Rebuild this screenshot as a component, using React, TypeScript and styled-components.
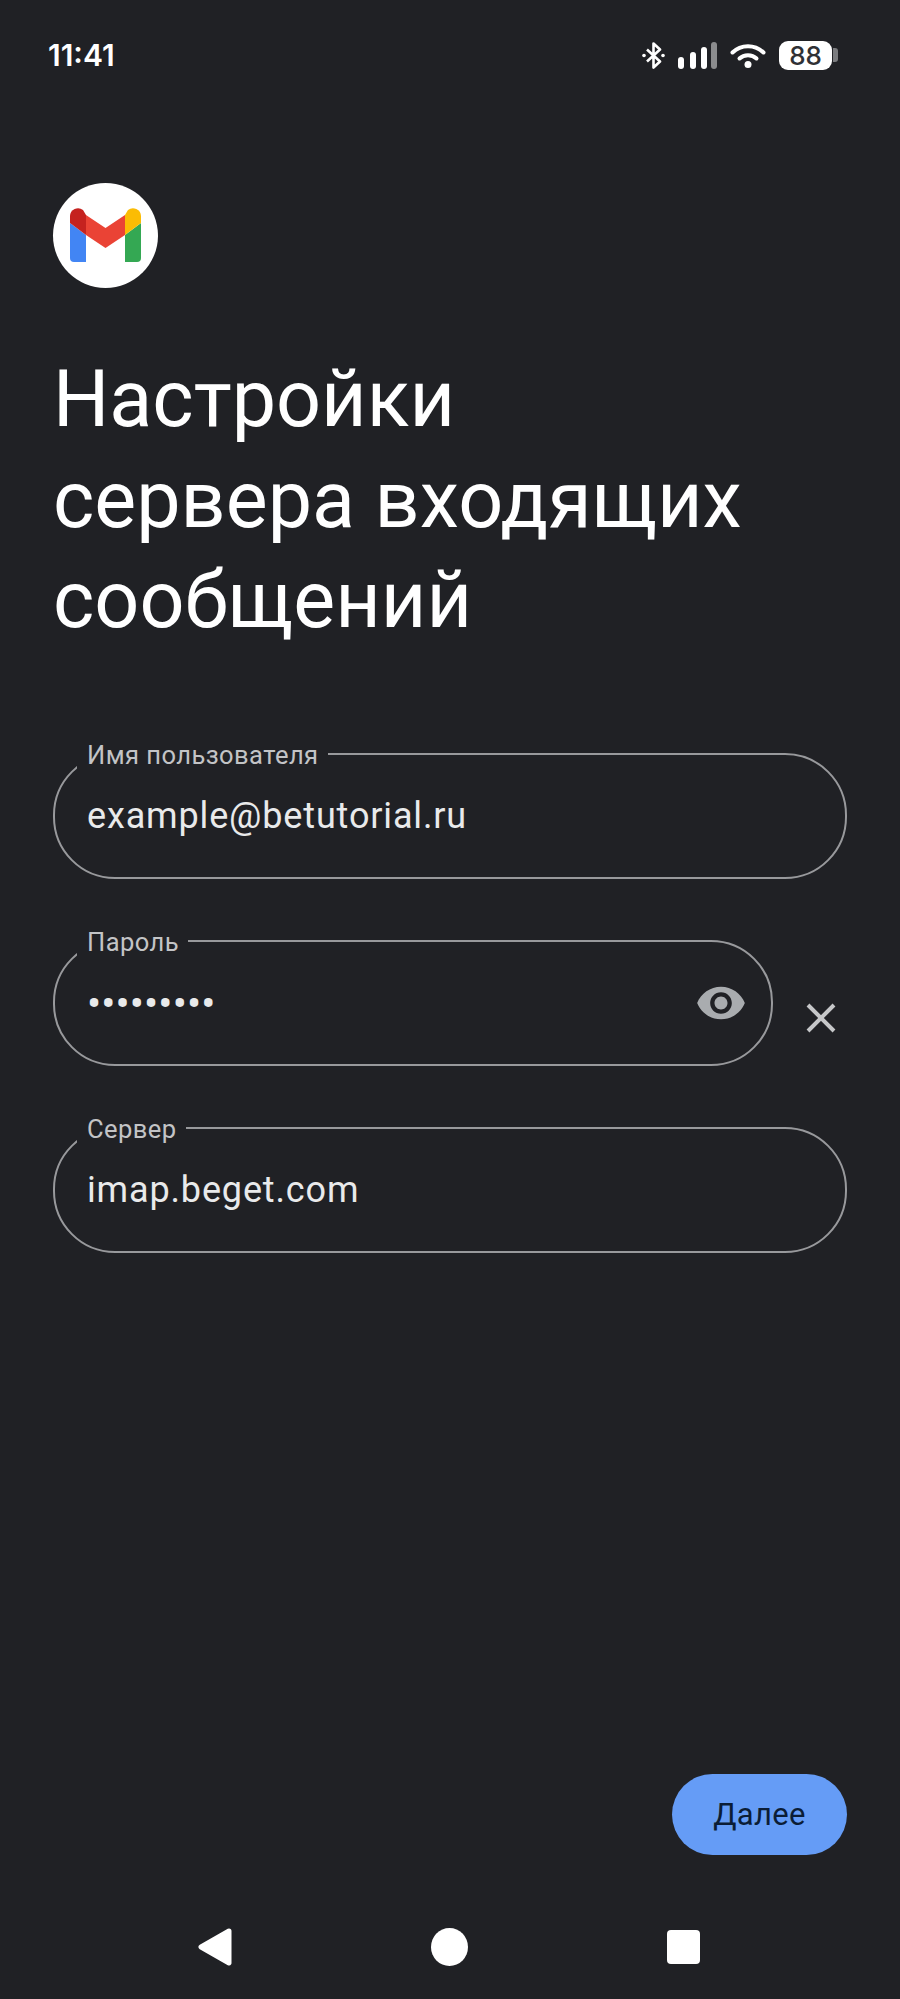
import React from "react";
import styled, { createGlobalStyle } from "styled-components";

const GlobalStyle = createGlobalStyle`
  html, body {
    margin: 0;
    padding: 0;
    background: #202125;
  }
  * {
    box-sizing: border-box;
  }
`;

const Screen = styled.div`
  width: 900px;
  height: 1999px;
  display: flex;
  flex-direction: column;
  background: #202125;
  color: #fff;
  font-family: Roboto, "Noto Sans", sans-serif;
  overflow: hidden;
`;

const StatusBar = styled.div`
  height: 110px;
  padding: 0 62px 0 48px;
  display: flex;
  align-items: center;
  justify-content: space-between;
`;

const Time = styled.div`
  font-family: Inter, Roboto, sans-serif;
  font-size: 30px;
  font-weight: 600;
`;

const StatusIcons = styled.div`
  display: flex;
  align-items: center;
  gap: 13px;
`;

const Battery = styled.div`
  display: flex;
  align-items: center;
  gap: 1px;
`;

const BatteryBody = styled.div`
  width: 53px;
  height: 29px;
  border-radius: 9px;
  background: #fff;
  color: #303135;
  display: flex;
  align-items: center;
  justify-content: center;
  font-family: Inter, Roboto, sans-serif;
  font-size: 26px;
  font-weight: 500;
`;

const BatteryNub = styled.div`
  width: 5px;
  height: 14px;
  border-radius: 0 3px 3px 0;
  background: #7b7c7f;
`;

const Main = styled.main`
  flex: 1;
  padding: 73px 53px 0;
  display: flex;
  flex-direction: column;
`;

const Logo = styled.div`
  width: 105px;
  height: 105px;
  border-radius: 50%;
  background: #fff;
  display: flex;
`;

const Title = styled.h1`
  margin: 61px 0 102px;
  font-size: 79px;
  font-weight: 400;
  line-height: 100.5px;
  color: #fff;
`;

const Fields = styled.div`
  display: flex;
  flex-direction: column;
  gap: 61px;
`;

const Row = styled.div`
  display: flex;
  align-items: center;
`;

const Field = styled.div<{ $width: number }>`
  position: relative;
  width: ${({ $width }) => $width}px;
  height: 126px;
  border: 2.5px solid #98999c;
  border-radius: 62px;
  padding: 0 24px 0 32px;
  display: flex;
  align-items: center;
  justify-content: space-between;
`;

const FieldLabel = styled.label`
  position: absolute;
  top: -14px;
  left: 22px;
  padding: 0 9px 0 10px;
  background: #202125;
  color: #c3c4c6;
  font-size: 25.5px;
  letter-spacing: 0.45px;
  line-height: 28px;
`;

const Value = styled.div`
  color: #e9eaeb;
  font-size: 36px;
  letter-spacing: 0.85px;
`;

const Dots = styled(Value)`
  padding-top: 2px;
  font-size: 42px;
  line-height: 1;
  letter-spacing: 0.1px;
`;

const ClearButton = styled.button`
  margin: 30px 0 0 33px;
  padding: 0;
  width: 30px;
  height: 30px;
  display: flex;
  border: 0;
  background: none;
`;

const Actions = styled.div`
  display: flex;
  justify-content: flex-end;
  padding-right: 53px;
`;

const NextButton = styled.button`
  width: 175px;
  height: 81px;
  border: 0;
  border-radius: 41px;
  background: #659cf6;
  color: #0b1d36;
  font-family: Roboto, sans-serif;
  font-size: 31px;
  font-weight: 400;
  letter-spacing: 0.3px;
`;

const NavBar = styled.nav`
  padding: 73px 2px 33px 0;
  display: flex;
  align-items: center;
  justify-content: center;
  gap: 199px;
`;

const NavCircle = styled.div`
  width: 37px;
  height: 38px;
  border-radius: 50%;
  background: #fff;
`;

const NavSquare = styled.div`
  width: 33px;
  height: 34px;
  border-radius: 4px;
  background: #fff;
`;

const BluetoothIcon = () => (
  <svg width="23" height="27" viewBox="0 0 23 27" fill="none">
    <path
      d="M5 7.5 18 19.5 11.5 25.5V1.5L18 7.5 5 19.5"
      stroke="#fff"
      strokeWidth="2.6"
      strokeLinejoin="round"
    />
    <circle cx="2" cy="13.5" r="1.8" fill="#fff" />
    <circle cx="21" cy="13.5" r="1.8" fill="#fff" />
  </svg>
);

const SignalIcon = () => (
  <svg width="39" height="27" viewBox="0 0 39 27">
    <rect x="0" y="15" width="6" height="12" rx="3" fill="#fff" />
    <rect x="12" y="10" width="6" height="17" rx="3" fill="#fff" />
    <rect x="23" y="5" width="6" height="22" rx="3" fill="#fff" />
    <rect x="33" y="0" width="6" height="27" rx="3" fill="#8b8c8e" />
  </svg>
);

const WifiIcon = () => (
  <svg width="36" height="25" viewBox="0 0 36 25" fill="none">
    <path d="M2.5 9.5C11 1 25 1 33.5 9.5" stroke="#fff" strokeWidth="4" strokeLinecap="round" />
    <path d="M9.5 15.5C14 11 22 11 26.5 15.5" stroke="#fff" strokeWidth="4" strokeLinecap="round" />
    <circle cx="18" cy="21.5" r="3.5" fill="#fff" />
  </svg>
);

const GmailMark = () => (
  <svg width="105" height="105" viewBox="0 0 105 105">
    <path d="M17 40 33 52V79H21a4 4 0 0 1-4-4Z" fill="#4285f4" />
    <path d="M88 40 72 52V79H84a4 4 0 0 0 4-4Z" fill="#34a853" />
    <path d="M33 32 52.5 45 72 32V52L52.5 65 33 52Z" fill="#ea4335" />
    <path d="M17 40V33a8 8 0 0 1 13-6L33 32V52Z" fill="#c5221f" />
    <path d="M88 40V33a8 8 0 0 0-13-6L72 32V52Z" fill="#fbbc04" />
  </svg>
);

const EyeIcon = () => (
  <svg width="52" height="52" viewBox="0 0 24 24" fill="#a9acaf">
    <path d="M12 4.5C7 4.5 2.73 7.61 1 12c1.73 4.39 6 7.500 11 7.500s9.270-3.110 11-7.500c-1.730-4.390-6-7.500-11-7.500zM12 17c-2.760 0-5-2.240-5-5s2.240-5 5-5 5 2.240 5 5-2.240 5-5 5zm0-8c-1.660 0-3 1.340-3 3s1.340 3 3 3 3-1.340 3-3-1.340-3-3-3z" />
  </svg>
);

const CloseIcon = () => (
  <svg width="30" height="30" viewBox="0 0 30 30" fill="none">
    <path d="M2 2 28 28M28 2 2 28" stroke="#c6c7c9" strokeWidth="4" />
  </svg>
);

const BackIcon = () => (
  <svg width="34" height="38" viewBox="0 0 34 38">
    <path
      d="M31 3 3 19 31 35Z"
      fill="#fff"
      stroke="#fff"
      strokeWidth="5"
      strokeLinejoin="round"
    />
  </svg>
);

export default function App() {
  return (
    <Screen>
      <GlobalStyle />
      <StatusBar>
        <Time>11:41</Time>
        <StatusIcons>
          <BluetoothIcon />
          <SignalIcon />
          <WifiIcon />
          <Battery>
            <BatteryBody>88</BatteryBody>
            <BatteryNub />
          </Battery>
        </StatusIcons>
      </StatusBar>
      <Main>
        <Logo>
          <GmailMark />
        </Logo>
        <Title>
          Настройки
          <br />
          сервера входящих
          <br />
          сообщений
        </Title>
        <Fields>
          <Field $width={794}>
            <FieldLabel>Имя пользователя</FieldLabel>
            <Value>example@betutorial.ru</Value>
          </Field>
          <Row>
            <Field $width={720}>
              <FieldLabel>Пароль</FieldLabel>
              <Dots>•••••••••</Dots>
              <EyeIcon />
            </Field>
            <ClearButton>
              <CloseIcon />
            </ClearButton>
          </Row>
          <Field $width={794}>
            <FieldLabel>Сервер</FieldLabel>
            <Value>imap.beget.com</Value>
          </Field>
        </Fields>
      </Main>
      <Actions>
        <NextButton>Далее</NextButton>
      </Actions>
      <NavBar>
        <BackIcon />
        <NavCircle />
        <NavSquare />
      </NavBar>
    </Screen>
  );
}
